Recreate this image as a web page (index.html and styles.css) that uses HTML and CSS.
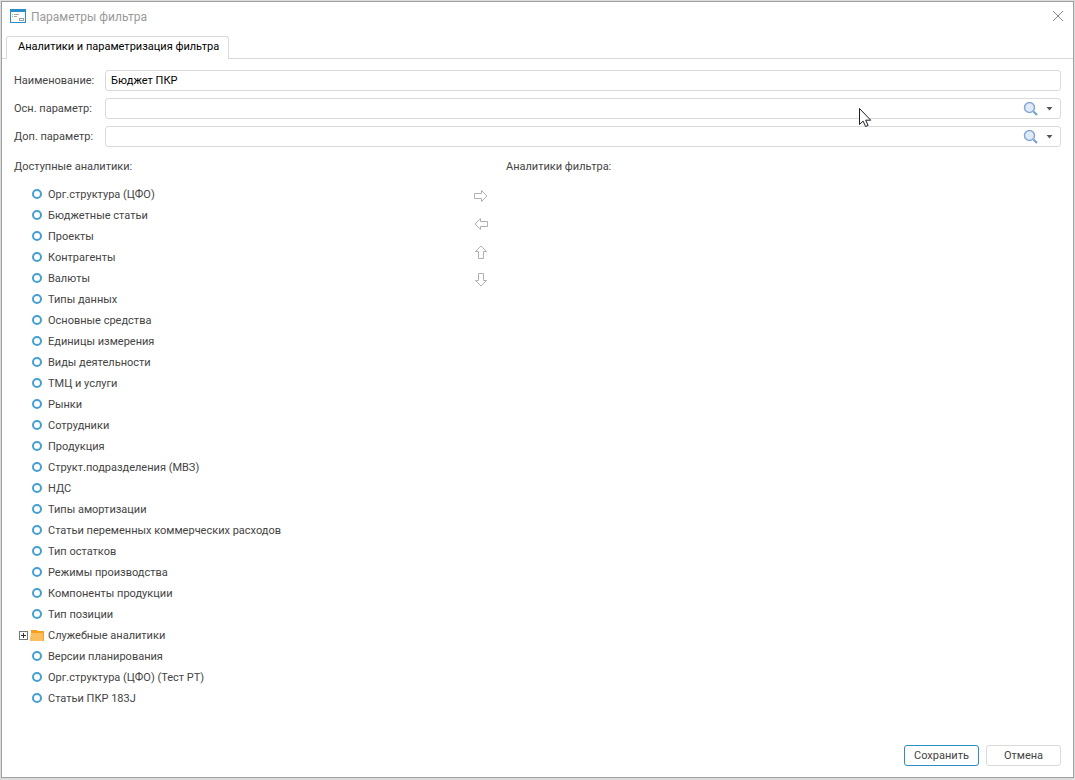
FILE: index.html
```html
<!DOCTYPE html>
<html lang="ru">
<head>
    <meta charset="UTF-8">
    <meta name="viewport" content="width=device-width, initial-scale=1.0">
    <title>Параметры фильтра</title>
    <link rel="stylesheet" href="styles.css">
</head>
<body>
    <div class="window">
        <header class="titlebar">
            <svg class="app-icon" width="16" height="14" viewBox="0 0 16 14" shape-rendering="crispEdges">
                <rect x="0.5" y="0.5" width="15" height="13" fill="#fff" stroke="#2a8dc8"/>
                <rect width="16" height="3" fill="#2a8dc8"/>
                <path d="M2 5.500h1M4 5.500h5M2 7.500h1M4 7.500h3" stroke="#a8a8a8"/>
                <rect x="9.500" y="9.500" width="4" height="2" fill="none" stroke="#a0a0a0"/>
            </svg>
            <h1>Параметры фильтра</h1>
            <button class="close-btn" type="button" aria-label="Закрыть">
                <svg width="10" height="10" viewBox="0 0 10 10"><path d="M0 0l10 10M10 0L0 10" stroke="#888"/></svg>
            </button>
        </header>

        <div class="tabs" role="tablist">
            <button class="tab" type="button" role="tab" aria-selected="true">Аналитики и параметризация фильтра</button>
        </div>

        <form class="panel">
            <div class="field">
                <label for="name">Наименование:</label>
                <div class="input-box"><input id="name" type="text" value="Бюджет ПКР"></div>
            </div>
            <div class="field">
                <label for="main-param">Осн. параметр:</label>
                <div class="input-box">
                    <input id="main-param" type="text">
                    <button class="field-btn" type="button" aria-label="Найти"><svg width="16" height="16"><use href="#icon-search"/></svg></button>
                    <button class="field-btn" type="button" aria-label="Выбрать"><svg width="7" height="4"><use href="#icon-caret"/></svg></button>
                </div>
            </div>
            <div class="field">
                <label for="extra-param">Доп. параметр:</label>
                <div class="input-box">
                    <input id="extra-param" type="text">
                    <button class="field-btn" type="button" aria-label="Найти"><svg width="16" height="16"><use href="#icon-search"/></svg></button>
                    <button class="field-btn" type="button" aria-label="Выбрать"><svg width="7" height="4"><use href="#icon-caret"/></svg></button>
                </div>
            </div>

            <div class="lists">
                <section>
                    <h2>Доступные аналитики:</h2>
                    <ul class="tree">
                        <li>Орг.структура (ЦФО)</li>
                        <li>Бюджетные статьи</li>
                        <li>Проекты</li>
                        <li>Контрагенты</li>
                        <li>Валюты</li>
                        <li>Типы данных</li>
                        <li>Основные средства</li>
                        <li>Единицы измерения</li>
                        <li>Виды деятельности</li>
                        <li>ТМЦ и услуги</li>
                        <li>Рынки</li>
                        <li>Сотрудники</li>
                        <li>Продукция</li>
                        <li>Структ.подразделения (МВЗ)</li>
                        <li>НДС</li>
                        <li>Типы амортизации</li>
                        <li>Статьи переменных коммерческих расходов</li>
                        <li>Тип остатков</li>
                        <li>Режимы производства</li>
                        <li>Компоненты продукции</li>
                        <li>Тип позиции</li>
                        <li class="folder">
                            <button class="expander" type="button" aria-label="Развернуть">
                                <svg width="9" height="9" viewBox="0 0 9 9" shape-rendering="crispEdges"><rect x="0.5" y="0.5" width="8" height="8" fill="#fff" stroke="#777"/><path d="M2 4.500h5M4.500 2v5" stroke="#333"/></svg>
                            </button>
                            <svg width="14" height="11" viewBox="0 0 14 11"><path d="M1 0h6l1 1h6v10h-2V3H1z" fill="#f5a01e"/><path d="M1 3h12v8H0V8z" fill="#f9be60"/></svg>
                            Служебные аналитики
                        </li>
                        <li>Версии планирования</li>
                        <li>Орг.структура (ЦФО) (Тест РТ)</li>
                        <li>Статьи ПКР 183J</li>
                    </ul>
                </section>
                <div class="moves">
                    <button type="button" aria-label="Добавить"><svg width="14" height="14"><use href="#icon-arrow"/></svg></button>
                    <button class="left" type="button" aria-label="Убрать"><svg width="14" height="14"><use href="#icon-arrow"/></svg></button>
                    <button class="up" type="button" aria-label="Выше"><svg width="14" height="14"><use href="#icon-arrow"/></svg></button>
                    <button class="down" type="button" aria-label="Ниже"><svg width="14" height="14"><use href="#icon-arrow"/></svg></button>
                </div>
                <section>
                    <h2>Аналитики фильтра:</h2>
                </section>
            </div>

            <footer class="actions">
                <button class="btn primary" type="submit">Сохранить</button>
                <button class="btn" type="button">Отмена</button>
            </footer>
        </form>
    </div>

    <svg class="cursor" width="13" height="20" viewBox="0 0 13 20"><path d="M.5 .5v16l3.600-3.400 2.500 5.400 2.500-1.100-2.400-5.200h5z" fill="#fff" stroke="#1c1c28"/></svg>

    <svg class="sprite" aria-hidden="true">
        <symbol id="icon-search" viewBox="0 0 16 16">
            <path d="M10.500 10.500l3.500 3.500" stroke="#7ba0cc" stroke-width="2.200"/>
            <circle cx="6.500" cy="6.500" r="5" fill="#dfeaf8" stroke="#86a8d0" stroke-width="1.500"/>
        </symbol>
        <symbol id="icon-caret" viewBox="0 0 7 4"><path d="M.5 0h6L3.500 3.500z" fill="#555"/></symbol>
        <symbol id="icon-arrow" viewBox="0 0 14 14"><path d="M.5 4.500h7v-3L13 7l-5.500 5.500v-3h-7z" fill="#fff" stroke="#b0b0b0"/></symbol>
    </svg>
</body>
</html>
```
FILE: styles.css
```css
*, *::before { box-sizing: border-box; }
body {
    margin: 0; padding: 1px 1px 2px; min-height: 100vh; display: flex;
    background: #dcdcdc; color: #444;
    font: 11px/21px Roboto, sans-serif;
}
button, input { font: inherit; color: inherit; }
button { border: none; background: none; padding: 0; cursor: pointer; }
svg { display: block; flex: none; }
h1, h2 { margin: 0; font-size: 11px; font-weight: normal; }

.window {
    flex: 1; display: flex; flex-direction: column;
    background: #fff; border: 1px solid #a0a0a0;
}
.titlebar { display: flex; align-items: center; height: 34px; padding: 0 10px 4px 8px; }
.titlebar h1 { flex: 1; margin-left: 5px; font-size: 12px; color: #999; }
.app-icon { margin-bottom: 2px; }
.close-btn { margin-bottom: 2px; }

.tabs { display: flex; padding: 0 4px; border-bottom: 1px solid #dadada; }
.tab {
    height: 23px; padding: 0 9px 2px 11px; margin-bottom: -1px; line-height: 20px;
    border: 1px solid #dadada; border-bottom: none; border-radius: 3px 3px 0 0;
    background: #fff; color: #000;
}

.panel { flex: 1; display: flex; flex-direction: column; padding: 11px 12px; }
.field { display: flex; margin-bottom: 7px; }
.field label { width: 91px; }
.input-box {
    flex: 1; display: flex; align-items: center; height: 21px; padding-right: 1px;
    border: 1px solid #dadada; border-radius: 3px;
}
.input-box input {
    flex: 1; min-width: 0; height: 19px; padding: 0 5px;
    border: none; outline: none; background: none; color: #000;
}
.field-btn { width: 19px; height: 19px; display: flex; align-items: center; justify-content: center; }

.lists { flex: 1; display: grid; grid-template-columns: 454px 38px 1fr; padding-top: 2px; }
.tree { list-style: none; margin: 7px 0 0; padding: 0; }
.tree li { display: flex; align-items: center; height: 21px; padding-left: 18px; }
.tree li:not(.folder)::before {
    content: ""; width: 10px; height: 10px; margin: 0 6px 1px 0;
    border: 2px solid #469fd2; border-radius: 50%;
}
.tree .folder { padding-left: 5px; }
.expander { margin-right: 2px; }
.folder > svg { margin: 0 4px 1px 0; }

.moves { display: flex; flex-direction: column; gap: 14px; padding: 33px 0 0 6px; }
.moves button { width: 14px; height: 14px; }
.left svg { transform: rotate(180deg); }
.up svg { transform: rotate(-90deg); }
.down svg { transform: rotate(90deg); }

.actions { display: flex; justify-content: flex-end; gap: 7px; }
.btn { width: 75px; height: 21px; line-height: 19px; border: 1px solid #dadada; border-radius: 3px; }
.btn.primary { border-color: #2a8dc8; }

.cursor { position: absolute; left: 859px; top: 108px; pointer-events: none; }
.sprite { position: absolute; width: 0; height: 0; }
```
